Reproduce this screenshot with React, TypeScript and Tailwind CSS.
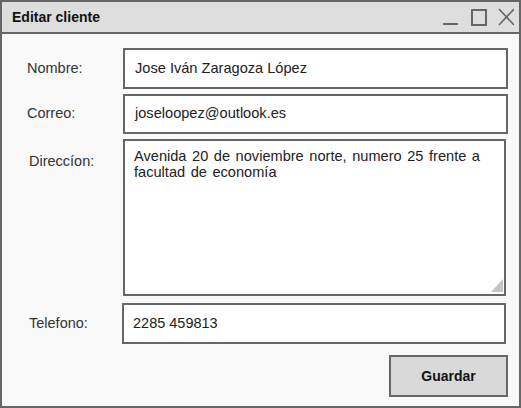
export default function App() {
  const font = { fontFamily: '"Liberation Sans", Arial, sans-serif' };
  return (
    <div
      className="w-[521px] h-[408px] border-2 border-[#666] bg-[#f9f9f9] flex flex-col text-[14px] font-['Liberation_Sans',Arial,sans-serif]"
      style={font}
    >
      {/* barra de titulo */}
      <div className="h-[32px] shrink-0 bg-[#dedede] border-b-2 border-[#666] flex items-center pl-[10px] pr-[5px]">
        <span className="font-bold text-[14px] text-[#111] flex-1">Editar cliente</span>
        <svg width="76" height="30" viewBox="0 0 76 30" className="shrink-0">
          <line x1="5" y1="22" x2="20" y2="22" stroke="#666" strokeWidth="2" />
          <rect x="34" y="8" width="14" height="15" fill="none" stroke="#666" strokeWidth="2" />
          <line x1="61" y1="7" x2="76" y2="23" stroke="#666" strokeWidth="1.6" />
          <line x1="76" y1="7" x2="61" y2="23" stroke="#666" strokeWidth="1.6" />
        </svg>
      </div>

      <div className="flex flex-col pt-[14px] pl-[25px] text-[#222]">
        <div className="flex items-center">
          <span className="w-[96px] text-[14.5px] text-[#333]">Nombre:</span>
          <div className="w-[385px] h-[41px] border-2 border-[#666] bg-white flex items-center pl-[10px] text-[14.6px]">
            Jose Iván Zaragoza López
          </div>
        </div>

        <div className="flex items-center mt-[5px]">
          <span className="w-[96px] text-[14.5px] text-[#333]">Correo:</span>
          <div className="w-[385px] h-[40px] border-2 border-[#666] bg-white flex items-center pl-[10px] text-[14.6px]">
            joseloopez@outlook.es
          </div>
        </div>

        <div className="flex items-start mt-[5px]">
          <span className="w-[96px] pl-[2px] pt-[12px] text-[14.5px] text-[#333]">Direccíon:</span>
          <div className="relative w-[383px] h-[157px] border-2 border-[#666] bg-white pl-[9px] pr-[8px] pt-[7px] leading-[16px] text-[14.6px] [word-spacing:1.5px]">
            Avenida 20 de noviembre norte, numero 25 frente a facultad de economía
            <svg width="12" height="13" viewBox="0 0 12 13" className="absolute right-[1px] bottom-[2px]">
              <polygon points="12,0 12,13 0,13" fill="#c4c4c4" />
            </svg>
          </div>
        </div>

        <div className="flex items-center mt-[7px]">
          <span className="w-[95px] pl-[2px] text-[14.5px] text-[#333]">Telefono:</span>
          <div className="w-[384px] h-[41px] border-2 border-[#666] bg-white flex items-center pl-[9px] text-[14.5px]">
            2285 459813
          </div>
        </div>

        <div className="flex justify-end mt-[11px] pr-[11px]">
          <button className="w-[119px] h-[42px] border-2 border-[#666] bg-[#d9d9d9] font-bold text-[14px] text-[#111]">
            Guardar
          </button>
        </div>
      </div>
    </div>
  );
}
